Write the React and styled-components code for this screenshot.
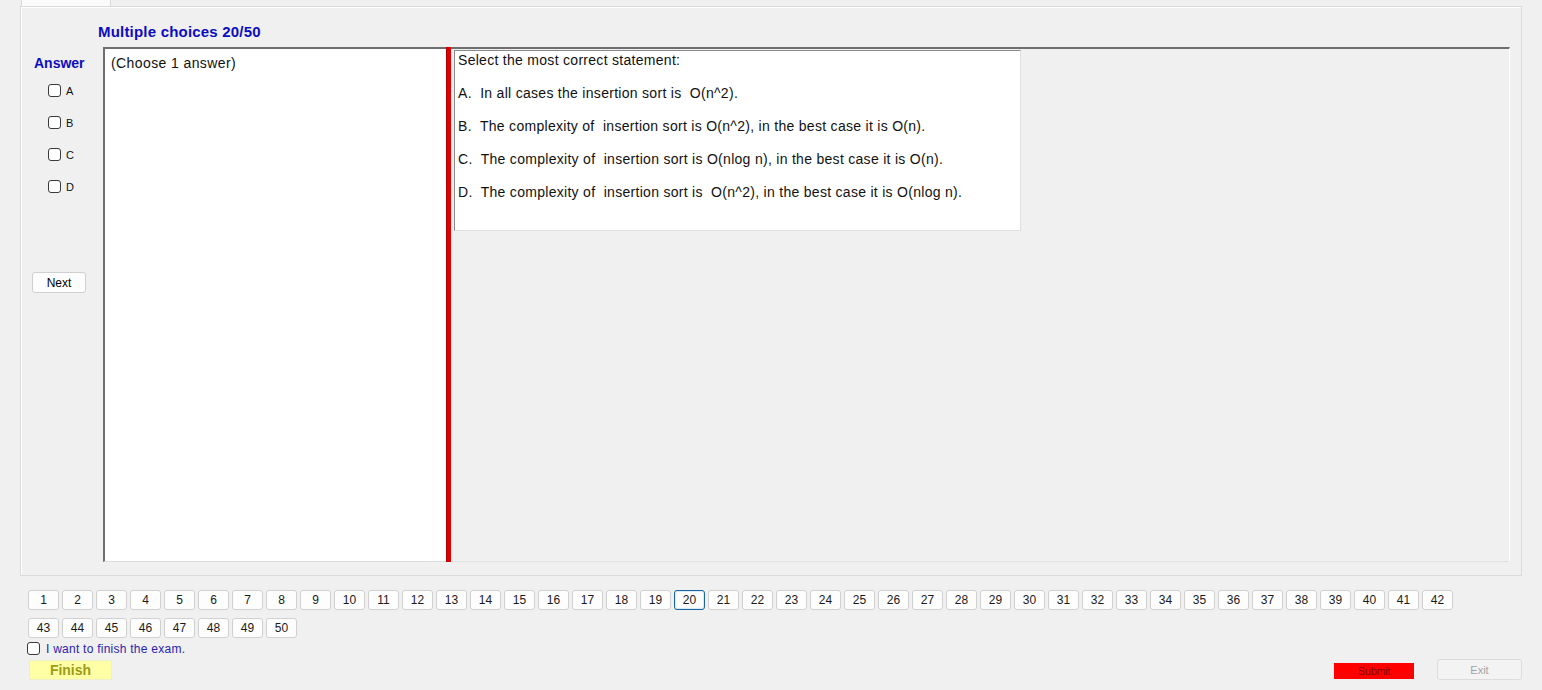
import styled, { createGlobalStyle, css } from "styled-components";

const GlobalStyle = createGlobalStyle`
  html, body {
    margin: 0;
    padding: 0;
    background: #f0f0f0;
    font-family: "Liberation Sans", Arial, sans-serif;
    color: #000;
  }
  * { box-sizing: border-box; }
`;

const Page = styled.div`
  width: 1542px;
  height: 690px;
  overflow: hidden;
  background: #f0f0f0;
`;

const TabStrip = styled.div`
  height: 6px;
  padding-left: 21px;
  display: flex;
`;

const Tab = styled.div`
  width: 90px;
  height: 6px;
  background: #fbfbfb;
  border: 1px solid #dadada;
  border-top: none;
  border-bottom: none;
`;

const TabPanel = styled.div`
  margin: 0 20px;
  height: 570px;
  border: 1px solid #dadada;
  box-shadow: inset 1px 1px 0 #fff;
  padding: 16px 11px 13px 0;
  display: grid;
  grid-template-columns: 82px 1fr;
  grid-template-rows: 24px 515px;
`;

const Title = styled.div`
  grid-column: 1 / 3;
  padding-left: 77px;
  font-size: 15px;
  font-weight: bold;
  line-height: 18px;
  letter-spacing: 0.2px;
  color: #0c0cc2;
`;

const AnswerColumn = styled.div`
  padding-left: 11px;
  display: flex;
  flex-direction: column;
  align-items: flex-start;
`;

const AnswerLabel = styled.div`
  margin: 8px 0 0 2px;
  font-size: 14px;
  font-weight: bold;
  line-height: 16px;
  color: #0c0cc2;
`;

const ChoiceList = styled.div`
  margin: 13px 0 0 16px;
  display: flex;
  flex-direction: column;
  gap: 19px;
`;

const Choice = styled.label`
  display: flex;
  align-items: center;
  gap: 5px;
  height: 13px;
  font-size: 11px;
  color: #111;
`;

const Box = styled.input.attrs({ type: "checkbox" })`
  appearance: none;
  margin: 0;
  width: 13px;
  height: 13px;
  border: 1px solid #3a3a3a;
  border-radius: 3px;
  background: #fff;
  flex: none;
`;

const FormButton = styled.button`
  font-family: "Liberation Sans", Arial, sans-serif;
  font-size: 12px;
  background: #fdfdfd;
  border: 1px solid #d0d0d0;
  border-radius: 3px;
  color: #000;
  padding: 0;
  cursor: default;
`;

const NextButton = styled(FormButton)`
  margin-top: 79px;
  width: 54px;
  height: 21px;
`;

const SplitArea = styled.div`
  display: flex;
  height: 515px;
`;

const AnswerBox = styled.div`
  width: 343px;
  background: #fff;
  border-top: 2px solid #6e6e6e;
  border-left: 2px solid #6e6e6e;
  border-bottom: 1px solid #dcdcdc;
  padding: 6px 0 0 6px;
  font-size: 14px;
  line-height: 16px;
  letter-spacing: 0.4px;
  color: #111;
`;

const Splitter = styled.div`
  width: 5px;
  background: #e00000;
  border-left: 1px solid #b00000;
`;

const QuestionPane = styled.div`
  flex: 1;
  border-top: 2px solid #6e6e6e;
  border-right: 1px solid #fff;
  border-bottom: 1px solid #e2e2e2;
  padding: 1px 0 0 3px;
`;

const QuestionBox = styled.div`
  width: 567px;
  height: 181px;
  background: #fff;
  border-top: 1px solid #8a8a8a;
  border-left: 1px solid #8a8a8a;
  border-right: 1px solid #e0e0e0;
  border-bottom: 1px solid #e0e0e0;
  padding: 1px 0 0 3px;
`;

const Line = styled.p`
  margin: 0 0 17px;
  font-size: 14px;
  line-height: 16px;
  letter-spacing: 0.29px;
  white-space: pre;
  color: #111;
`;

const Bottom = styled.div`
  padding: 14px 0 0 27px;
`;

const NumberGrid = styled.div`
  margin-left: 1px;
  display: grid;
  grid-template-columns: repeat(42, 31px);
  column-gap: 3px;
  row-gap: 8px;
`;

const NumberButton = styled(FormButton)`
  height: 20px;
  line-height: 18px;
  color: #1a1a1a;
  ${(props) =>
    props.active &&
    css`
      border-color: #1c65a0;
      box-shadow: inset 0 0 0 1px #d6ebf8;
    `}
`;

const FinishCheck = styled.label`
  margin-top: 4px;
  display: flex;
  align-items: center;
  gap: 6px;
  height: 13px;
  font-size: 12px;
  letter-spacing: 0.25px;
  color: #2a22b0;
`;

const ActionRow = styled.div`
  margin-top: 4px;
  display: flex;
  align-items: center;
  padding-right: 20px;
`;

const FinishButton = styled.div`
  margin-left: 2px;
  width: 83px;
  height: 20px;
  background: #ffffa6;
  border: 1px solid #f0f0c8;
  text-align: center;
  font-size: 14px;
  font-weight: bold;
  line-height: 18px;
  color: #9c9c14;
`;

const Spacer = styled.div`
  flex: 1;
`;

const SubmitButton = styled.div`
  margin-top: 2px;
  width: 80px;
  height: 16px;
  background: #ff0000;
  text-align: center;
  font-size: 11px;
  line-height: 16px;
  color: #8a0000;
  letter-spacing: -0.3px;
`;

const ExitButton = styled(FormButton)`
  margin-left: 23px;
  width: 85px;
  height: 21px;
  background: #f3f3f3;
  border-color: #dcdcdc;
  color: #a3a3a3;
  font-size: 11px;
`;

const choices = ["A", "B", "C", "D"];

const lines = [
  "Select the most correct statement:",
  "A.  In all cases the insertion sort is  O(n^2).",
  "B.  The complexity of  insertion sort is O(n^2), in the best case it is O(n).",
  "C.  The complexity of  insertion sort is O(nlog n), in the best case it is O(n).",
  "D.  The complexity of  insertion sort is  O(n^2), in the best case it is O(nlog n).",
];

const numbers = Array.from({ length: 50 }, (_, i) => i + 1);

export default function App() {
  return (
    <Page>
      <GlobalStyle />
      <TabStrip>
        <Tab />
      </TabStrip>
      <TabPanel>
        <Title>Multiple choices 20/50</Title>
        <AnswerColumn>
          <AnswerLabel>Answer</AnswerLabel>
          <ChoiceList>
            {choices.map((c) => (
              <Choice key={c}>
                <Box />
                {c}
              </Choice>
            ))}
          </ChoiceList>
          <NextButton>Next</NextButton>
        </AnswerColumn>
        <SplitArea>
          <AnswerBox>(Choose 1 answer)</AnswerBox>
          <Splitter />
          <QuestionPane>
            <QuestionBox>
              {lines.map((l) => (
                <Line key={l}>{l}</Line>
              ))}
            </QuestionBox>
          </QuestionPane>
        </SplitArea>
      </TabPanel>
      <Bottom>
        <NumberGrid>
          {numbers.map((n) => (
            <NumberButton key={n} active={n === 20}>
              {n}
            </NumberButton>
          ))}
        </NumberGrid>
        <FinishCheck>
          <Box />
          I want to finish the exam.
        </FinishCheck>
        <ActionRow>
          <FinishButton>Finish</FinishButton>
          <Spacer />
          <SubmitButton>Submit</SubmitButton>
          <ExitButton>Exit</ExitButton>
        </ActionRow>
      </Bottom>
    </Page>
  );
}
